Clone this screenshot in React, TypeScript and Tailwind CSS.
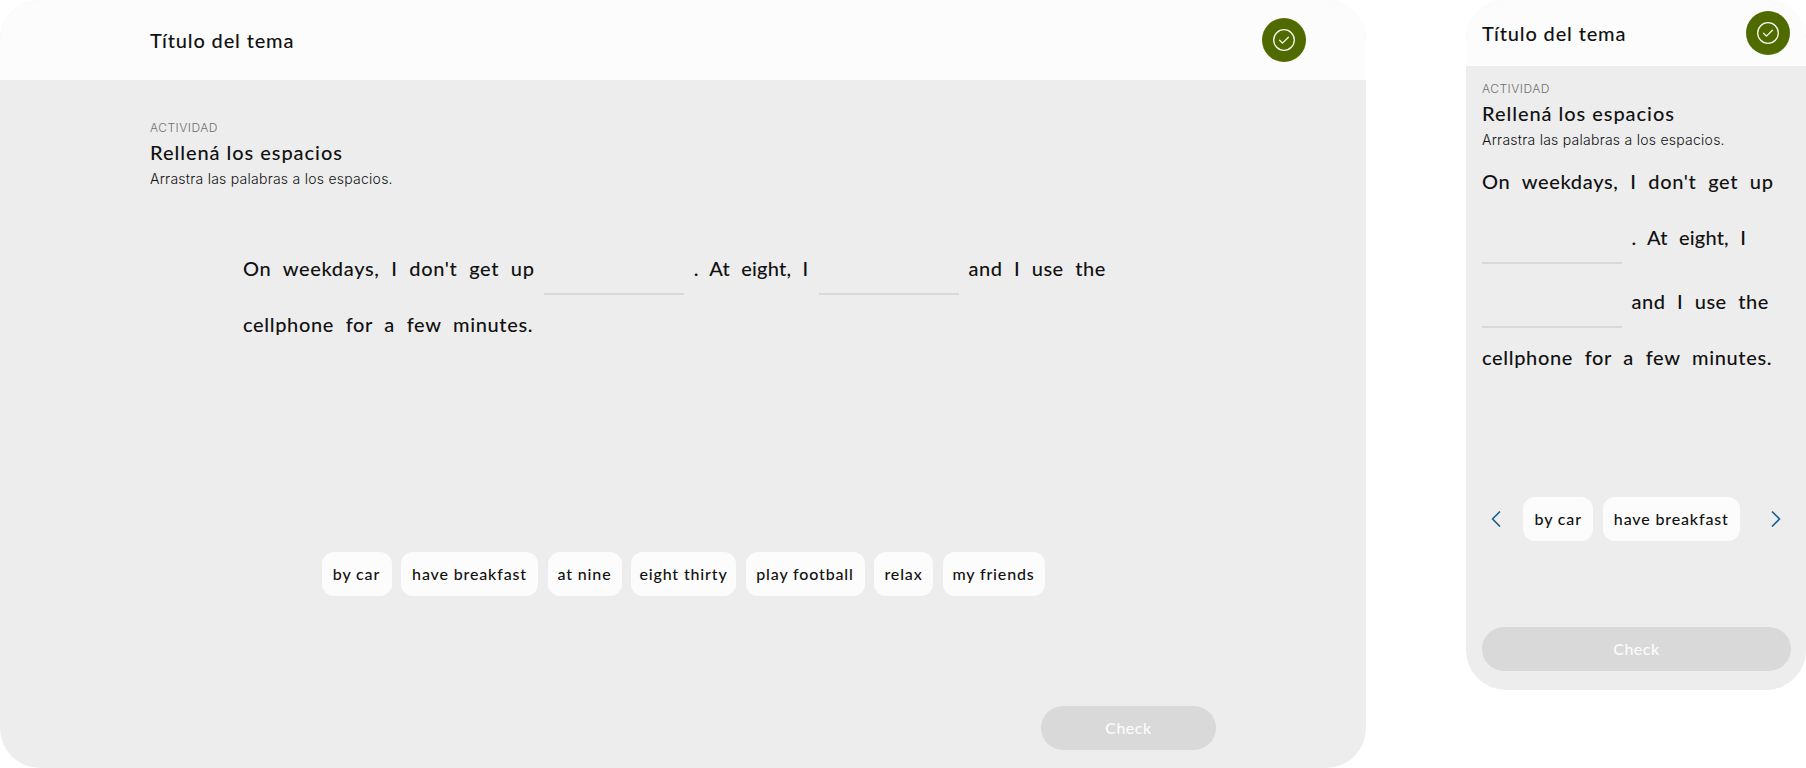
import { ChevronLeft, ChevronRight } from "lucide-react";

const display = "font-['Lato','Noto_Sans',sans-serif] font-medium";

function Badge() {
  return (
    <div className="flex h-[44px] w-[44px] items-center justify-center rounded-full bg-[#4f6b00]">
      <svg width="24" height="24" viewBox="0 0 24 24" fill="none" stroke="#f4f6ec" strokeWidth="1.3" strokeLinecap="round" strokeLinejoin="round">
        <circle cx="12" cy="12" r="10.3" />
        <path d="m7.6 12.2 2.9 2.9 5.9-5.9" />
      </svg>
    </div>
  );
}

function Header({ height, px }: { height: string; px: string }) {
  return (
    <header className={`flex items-center justify-between bg-[#fcfcfc] ${height} ${px}`}>
      <h1 className={`${display} text-[20px] leading-7 tracking-[0.85px] text-[#111111]`}>Título del tema</h1>
      <Badge />
    </header>
  );
}

function Intro() {
  return (
    <div className="flex flex-col">
      <p className="font-['Inter',sans-serif] text-[12px] leading-4 font-light tracking-[0.5px] text-[#6f6f6f]">ACTIVIDAD</p>
      <h2 className={`${display} mt-[2px] text-[20px] leading-7 tracking-[0.95px] text-[#111111]`}>Rellená los espacios</h2>
      <p className="mt-[3px] font-['Inter',sans-serif] text-[14px] leading-5 font-light tracking-[0.25px] text-[#111111]">Arrastra las palabras a los espacios.</p>
    </div>
  );
}

function Blank() {
  return <span className="mt-[7px] mr-[9.5px] mb-[5px] inline-block h-[52px] w-[140px] border-b-2 border-[#d9d9d9] align-[-24px]" />;
}

function Chip({ label, width }: { label: string; width: string }) {
  return (
    <div className={`${display} flex h-[44px] items-center justify-center rounded-xl bg-[#fcfcfc] text-[16px] tracking-[0.85px] whitespace-nowrap text-[#111111] ${width}`}>
      {label}
    </div>
  );
}

function Check({ className }: { className: string }) {
  return (
    <button className={`${display} flex h-[44px] items-center justify-center rounded-full bg-[#d9d9d9] text-[16px] tracking-[0.5px] text-[#fcfcfc] ${className}`}>
      Check
    </button>
  );
}

function Sentence({ className }: { className: string }) {
  return (
    <p className={`${display} text-[20px] leading-[48px] tracking-[0.65px] [word-spacing:6px] text-[#111111] ${className}`}>
      On weekdays, I don't get up
      <span className="[word-spacing:4px]"> </span>
      <Blank />
      <span className="tracking-[0.2px]">. At eight, I</span>
      <span className="[word-spacing:5px]"> </span>
      <Blank />
      <span className="tracking-[0.5px]">and I use the </span>
      cellphone for a few minutes.
    </p>
  );
}

const words = [
  { label: "by car", width: "w-[70px]" },
  { label: "have breakfast", width: "w-[137px]" },
  { label: "at nine", width: "w-[74px]" },
  { label: "eight thirty", width: "w-[105px]" },
  { label: "play football", width: "w-[119px]" },
  { label: "relax", width: "w-[59px]" },
  { label: "my friends", width: "w-[102px]" },
];

export default function App() {
  return (
    <div className="flex w-[1806px] items-start justify-between bg-white">
      <section className="flex h-[768px] w-[1366px] flex-col overflow-hidden rounded-[40px] bg-[#ededed]">
        <Header height="h-[80px]" px="pl-[150px] pr-[60px]" />
        <div className="flex flex-1 flex-col px-[150px] pt-[40px]">
          <Intro />
          <Sentence className="mt-[47px] ml-[93px] w-[880px]" />
          <div className="mt-[204px] flex justify-center gap-[9.5px]">
            {words.map((w) => (
              <Chip key={w.label} label={w.label} width={w.width} />
            ))}
          </div>
          <div className="mt-[110px] flex justify-end">
            <Check className="w-[175px]" />
          </div>
        </div>
      </section>

      <section className="flex h-[690px] w-[340px] flex-col overflow-hidden rounded-[40px] bg-[#ededed]">
        <Header height="h-[66px]" px="pl-[16px] pr-[16px]" />
        <div className="flex flex-col px-[16px] pt-[15px]">
          <Intro />
          <Sentence className="mt-[7px] w-[308px]" />
          <div className="mt-[116px] flex items-center justify-between">
            <ChevronLeft size={28} strokeWidth={1.5} className="text-[#1c5f8f]" />
            <div className="mr-[9px] flex gap-[9.5px]">
              <Chip label="by car" width="w-[70px]" />
              <Chip label="have breakfast" width="w-[137px]" />
            </div>
            <ChevronRight size={28} strokeWidth={1.5} className="text-[#1c5f8f]" />
          </div>
          <Check className="mt-[86px] w-[309px]" />
        </div>
      </section>
    </div>
  );
}
